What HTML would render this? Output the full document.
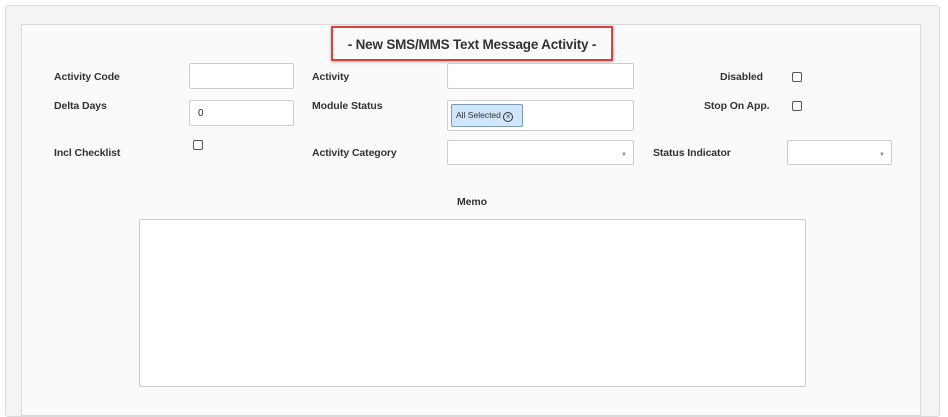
<!DOCTYPE html><html><head><style>
body{margin:0;width:948px;height:402px;background:#fff;font-family:"Liberation Sans",Arial,sans-serif;position:relative;overflow:hidden}
.a{position:absolute}
.outer{left:5px;top:5px;width:933px;height:410px;background:#f4f4f4;border:1px solid #dcdcdc;border-radius:3px}
.inner{left:21px;top:24px;width:898px;height:390px;background:#fafafa;border:1px solid #d9d9d9}
.lb{font-size:10.5px;font-weight:bold;color:#333;letter-spacing:-0.1px}
.in{background:#fff;border:1px solid #ccc;border-radius:2px;box-sizing:border-box;font-size:11px;color:#222}
.cb{width:8px;height:8px;border:1px solid #555;border-radius:2px;background:#fff}
.car{font-size:6px;color:#888}
</style></head><body>
<div class="a outer"></div>
<div class="a inner"></div>
<div class="a" style="left:331px;top:26px;width:278px;height:31px;border:2px solid #d9413e;box-shadow:0 1px 3px rgba(0,0,0,.3)"></div>
<div class="a" style="left:331px;top:37px;width:282px;text-align:center;font-size:13.5px;font-weight:bold;color:#333;letter-spacing:-0.2px">- New SMS/MMS Text Message Activity -</div>
<div class="a lb" style="left:54px;top:71px">Activity Code</div>
<div class="a lb" style="left:54px;top:100px">Delta Days</div>
<div class="a lb" style="left:54px;top:147px">Incl Checklist</div>
<div class="a lb" style="left:312px;top:71px">Activity</div>
<div class="a lb" style="left:312px;top:100px">Module Status</div>
<div class="a lb" style="left:312px;top:147px">Activity Category</div>
<div class="a lb" style="left:720px;top:71px">Disabled</div>
<div class="a lb" style="left:704px;top:100px">Stop On App.</div>
<div class="a lb" style="left:653px;top:147px">Status Indicator</div>
<div class="a in" style="left:189px;top:63px;width:105px;height:26px"></div>
<div class="a in" style="left:189px;top:100px;width:105px;height:26px;padding:7px 0 0 8px;font-size:10px">0</div>
<div class="a in" style="left:447px;top:63px;width:187px;height:26px"></div>
<div class="a in" style="left:447px;top:100px;width:187px;height:31px"></div>
<div class="a" style="left:451px;top:104px;width:72px;height:23px;background:#cfe5f9;border:1px solid #7a9ab5;border-radius:2px;font-size:8.5px;color:#333;line-height:20px;padding-left:4px;box-sizing:border-box">All Selected <span style="display:inline-block;width:8px;height:8px;border:1px solid #333;border-radius:50%;font-size:8px;line-height:8px;text-align:center;vertical-align:-1px">×</span></div>
<div class="a in" style="left:447px;top:140px;width:187px;height:25px"><span class="a car" style="right:6px;top:11px">▼</span></div>
<div class="a in" style="left:787px;top:140px;width:105px;height:25px"><span class="a car" style="right:6px;top:11px">▼</span></div>
<div class="a cb" style="left:792px;top:72px"></div>
<div class="a cb" style="left:792px;top:101px"></div>
<div class="a cb" style="left:193px;top:140px"></div>
<div class="a lb" style="left:457px;top:196px">Memo</div>
<div class="a in" style="left:139px;top:219px;width:667px;height:168px"></div>
</body></html>
